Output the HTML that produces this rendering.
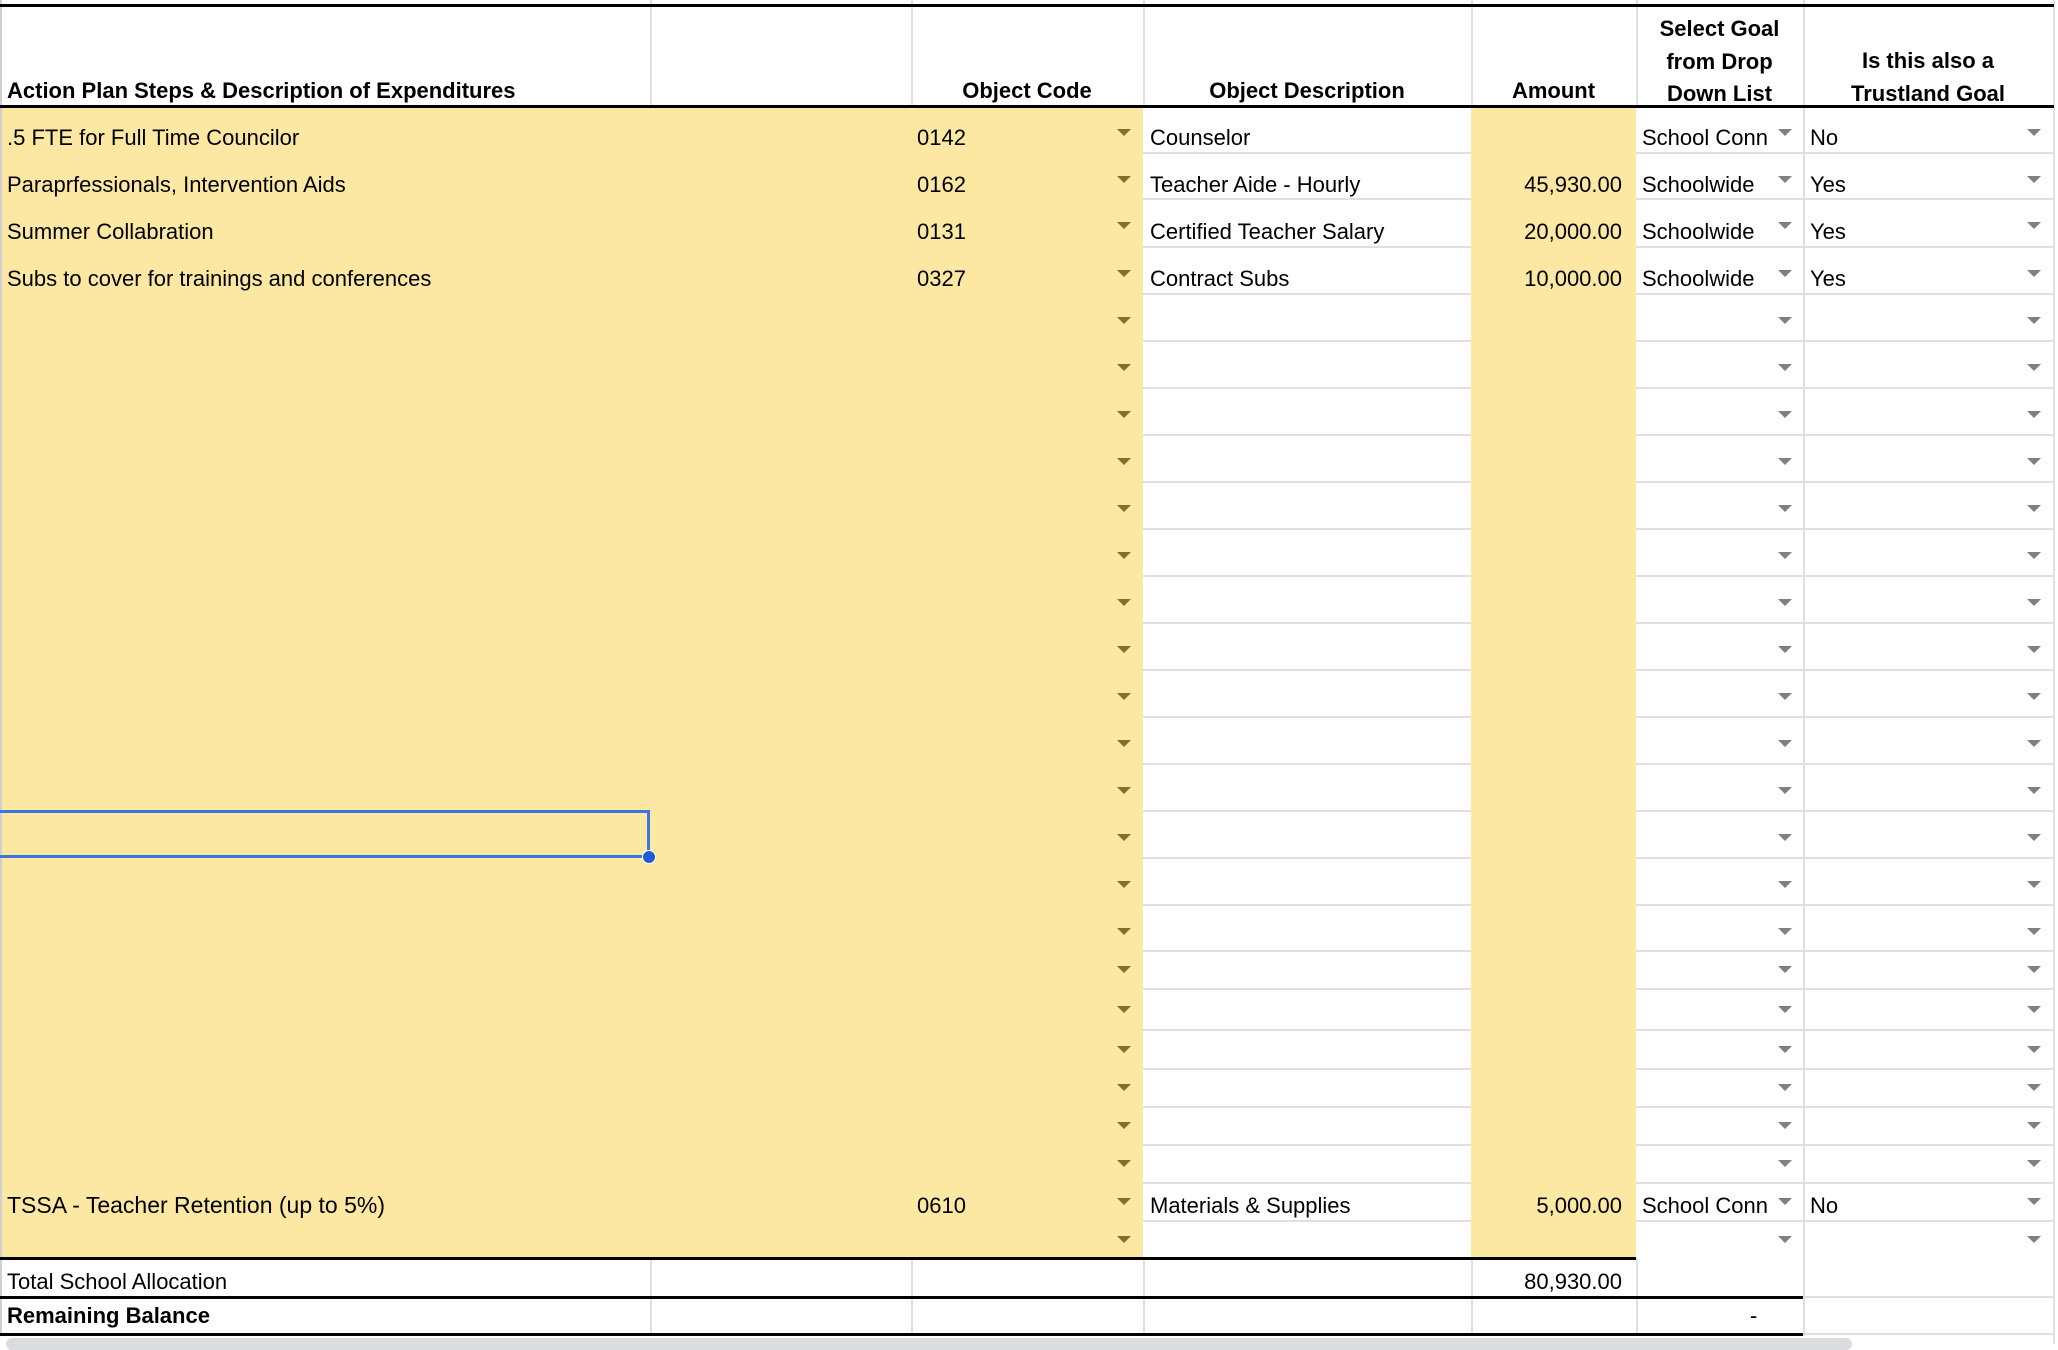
<!DOCTYPE html>
<html><head><meta charset="utf-8"><style>
*{margin:0;padding:0;box-sizing:border-box}
body{width:2058px;height:1344px;background:#fff;position:relative;overflow:hidden;font-family:"Liberation Sans",sans-serif;font-size:22px;color:#000}
.a{position:absolute}
.y{background:#fce8a2}
.t{position:absolute;white-space:nowrap;line-height:26px}
.b{font-weight:bold}
.vl{position:absolute;width:2px;background:#e0e0e0}
.hl{position:absolute;height:2px;background:#e0e0e0}
.bk{position:absolute;height:3px;background:#000}
.tg{position:absolute;width:0;height:0;border-left:7px solid transparent;border-right:7px solid transparent;border-top:7px solid #8b6d25}
.tr{position:absolute;width:0;height:0;border-left:7px solid transparent;border-right:7px solid transparent;border-top:7px solid #808080}
.clip{position:absolute;overflow:hidden;white-space:nowrap;line-height:26px}
</style></head><body>
<!-- yellow fills -->
<div class="a y" style="left:0;top:106px;width:1143px;height:1152px"></div>
<div class="a y" style="left:1471px;top:106px;width:165px;height:1152px"></div>
<div id="g"></div>
<!-- left edge line -->
<div class="vl" style="left:0;top:0;height:1336px;background:#d0d0d0"></div>
<!-- header verticals -->
<div class="vl" style="left:650px;top:0;height:106px"></div>
<div class="vl" style="left:911px;top:0;height:106px"></div>
<div class="vl" style="left:1143px;top:0;height:106px"></div>
<div class="vl" style="left:1471px;top:0;height:106px"></div>
<div class="vl" style="left:1636px;top:0;height:106px"></div>
<div class="vl" style="left:1803px;top:0;height:1336px"></div>
<div class="vl" style="left:2053px;top:0;height:1344px"></div>
<!-- total rows verticals -->
<div class="vl" style="left:650px;top:1258px;height:78px"></div>
<div class="vl" style="left:911px;top:1258px;height:78px"></div>
<div class="vl" style="left:1143px;top:1258px;height:78px"></div>
<div class="vl" style="left:1471px;top:1258px;height:78px"></div>
<div class="vl" style="left:1636px;top:1258px;height:78px"></div>
<div class="hl" style="left:1803px;top:1296px;width:252px"></div>
<div class="hl" style="left:1803px;top:1333px;width:252px"></div>
<!-- black lines -->
<div class="bk" style="left:0;top:4px;width:2054px"></div>
<div class="bk" style="left:0;top:105px;width:2054px"></div>
<div class="bk" style="left:0;top:1257px;width:1636px"></div>
<div class="bk" style="left:0;top:1296px;width:1803px"></div>
<div class="bk" style="left:0;top:1333px;width:1803px"></div>
<!-- scrollbar -->
<div class="a" style="left:6px;top:1338px;width:1846px;height:12px;background:#dadce0;border-radius:6px"></div>

<!-- header text -->
<div class="t b" style="left:7px;top:78px">Action Plan Steps &amp; Description of Expenditures</div>
<div class="t b" style="left:911px;width:232px;text-align:center;top:78px">Object Code</div>
<div class="t b" style="left:1143px;width:328px;text-align:center;top:78px">Object Description</div>
<div class="t b" style="left:1471px;width:165px;text-align:center;top:78px">Amount</div>
<div class="t b" style="left:1636px;width:167px;text-align:center;top:13px;line-height:32.5px">Select Goal<br>from Drop<br>Down List</div>
<div class="t b" style="left:1803px;width:250px;text-align:center;top:45px;line-height:32.5px">Is this also a<br>Trustland Goal</div>

<!-- data rows -->
<div class="t" style="left:7px;top:125px">.5 FTE for Full Time Councilor</div>
<div class="t" style="left:917px;top:125px">0142</div>
<div class="t" style="left:1150px;top:125px">Counselor</div>
<div class="clip" style="left:1642px;top:125px;width:126px">School Conn</div>
<div class="t" style="left:1810px;top:125px">No</div>

<div class="t" style="left:7px;top:172px">Paraprfessionals, Intervention Aids</div>
<div class="t" style="left:917px;top:172px">0162</div>
<div class="t" style="left:1150px;top:172px">Teacher Aide - Hourly</div>
<div class="t" style="left:1471px;width:151px;text-align:right;top:172px">45,930.00</div>
<div class="t" style="left:1642px;top:172px">Schoolwide</div>
<div class="t" style="left:1810px;top:172px">Yes</div>

<div class="t" style="left:7px;top:219px">Summer Collabration</div>
<div class="t" style="left:917px;top:219px">0131</div>
<div class="t" style="left:1150px;top:219px">Certified Teacher Salary</div>
<div class="t" style="left:1471px;width:151px;text-align:right;top:219px">20,000.00</div>
<div class="t" style="left:1642px;top:219px">Schoolwide</div>
<div class="t" style="left:1810px;top:219px">Yes</div>

<div class="t" style="left:7px;top:266px">Subs to cover for trainings and conferences</div>
<div class="t" style="left:917px;top:266px">0327</div>
<div class="t" style="left:1150px;top:266px">Contract Subs</div>
<div class="t" style="left:1471px;width:151px;text-align:right;top:266px">10,000.00</div>
<div class="t" style="left:1642px;top:266px">Schoolwide</div>
<div class="t" style="left:1810px;top:266px">Yes</div>

<div class="t" style="left:7px;top:1192px;font-size:23px">TSSA - Teacher Retention (up to 5%)</div>
<div class="t" style="left:917px;top:1193px">0610</div>
<div class="t" style="left:1150px;top:1193px">Materials &amp; Supplies</div>
<div class="t" style="left:1471px;width:151px;text-align:right;top:1193px">5,000.00</div>
<div class="clip" style="left:1642px;top:1193px;width:126px">School Conn</div>
<div class="t" style="left:1810px;top:1193px">No</div>

<div class="t" style="left:7px;top:1269px">Total School Allocation</div>
<div class="t" style="left:1471px;width:151px;text-align:right;top:1269px">80,930.00</div>
<div class="t b" style="left:7px;top:1303px">Remaining Balance</div>
<div class="t" style="left:1750px;top:1303px">-</div>

<!-- selection -->
<div class="a" style="left:0;top:810px;width:650px;height:48px;border:3px solid #3b76de;border-left:none"></div>
<div class="a" style="left:642px;top:850px;width:14px;height:14px;border-radius:50%;background:#1f5bd6;border:1px solid #fff"></div>

<script>
var tops=[106,153,199,247,294,341,388,435,482,529,576,623,670,717,764,811,858,905,951,989,1030,1069,1107,1145,1183,1221,1258];
var g=document.getElementById('g'),h='';
for(var i=0;i<tops.length-1;i++){
 var b=tops[i+1],hh=b-tops[i];
 var cy=hh>44?tops[i]+27:tops[i]+Math.round(hh/2);
 if(i<tops.length-2){
  h+='<div class="hl" style="left:1143px;top:'+(b-1)+'px;width:328px"></div>';
  h+='<div class="hl" style="left:1636px;top:'+(b-1)+'px;width:419px"></div>';
 }
 h+='<div class="tg" style="left:1117px;top:'+(cy-4)+'px"></div>';
 h+='<div class="tr" style="left:1778px;top:'+(cy-4)+'px"></div>';
 h+='<div class="tr" style="left:2027px;top:'+(cy-4)+'px"></div>';
}
g.innerHTML=h;
</script>
</body></html>
